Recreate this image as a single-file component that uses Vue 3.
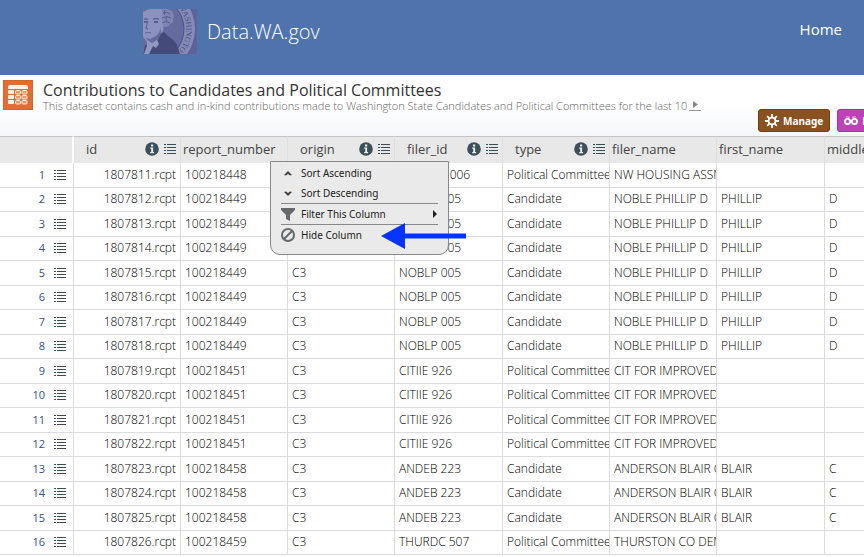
<script setup>
const columns = [
  { name: 'id', tools: true },
  { name: 'report_number', tools: false },
  { name: 'origin', tools: true, menu: true },
  { name: 'filer_id', tools: true, wide: true },
  { name: 'type', tools: true },
  { name: 'filer_name', tools: false },
  { name: 'first_name', tools: false, wide: true },
  { name: 'middle_name', tools: false },
]

const P = 'Political Committee'
const C = 'Candidate'
const filers = [
  ['100218448', 'NWHOM 006', P, 'NW HOUSING ASSN', '', ''],
  ...Array.from({ length: 7 }, () => ['100218449', 'NOBLP 005', C, 'NOBLE PHILLIP D', 'PHILLIP', 'D']),
  ...Array.from({ length: 4 }, () => ['100218451', 'CITIIE 926', P, 'CIT FOR IMPROVED', '', '']),
  ...Array.from({ length: 3 }, () => ['100218458', 'ANDEB 223', C, 'ANDERSON BLAIR C', 'BLAIR', 'C']),
  ['100218459', 'THURDC 507', P, 'THURSTON CO DEM', '', ''],
]
const rows = filers.map(([report, ...rest], i) => [`${1807811 + i}.rcpt`, report, 'C3', ...rest])
</script>

<template>
  <div class="page">
    <header class="site">
      <a class="brand" href="#">
        <svg class="seal" viewBox="0 0 54 45" aria-hidden="true">
          <defs>
            <path id="ring" d="M35-2A34 34 0 0 1 26 50" />
          </defs>
          <rect width="54" height="45" fill="#5d6299" />
          <circle cx="9" cy="20" r="43" fill="#858bb6" />
          <circle cx="9" cy="20" r="32.500" fill="#4d5489" />
          <circle cx="9" cy="20" r="31.500" fill="#666b9f" />
          <path d="M0 3Q6-1 13 0h7l1 14-1 8-4 5-1 7-8 2-3-3-4-5Z" fill="#8b92bc" />
          <path d="M19 0q5-1 7 1 4 0 4 4 2 2 0 5 1 4-3 5-1 3-5 3-3-1-2-5-2-3 0-6-2-4-1-7Z" fill="#7e85b1" />
          <path d="M20 4q4-2 7 1M19 9q5-3 9 0M19 14q4-3 8 0M22 1q-2 3 0 5m2 1q-2 3 0 5" fill="none" stroke="#5a6092" />
          <path d="M1 10.500q2-1 4 0m5 0q3-2 6 0" fill="none" stroke="#5b6194" stroke-width="1.300" />
          <path d="M1 13h3m7 0h4" stroke="#4a5082" stroke-width="1.400" />
          <path d="M5 12l-2 7 2 1m-3 4q3-1 6 0" fill="none" stroke="#60669a" stroke-width="1.200" />
          <path d="M17 17q1 6-4 10l-6 3-4-1 4 5 8 0 3-9Z" fill="#656b9d" />
          <path d="M14 33l4-8 3-2 4 4q8 4 11 14l1 7H0l2-12 8 1Z" fill="#444b7b" />
          <path d="M4 31l5 3 5-3 2 4-3 4-3-2-4 8H1l3-8Z" fill="#9299c1" />
          <text font-size="8" fill="#484f80" font-family="Liberation Serif, serif"><textPath href="#ring">WASHINGTON</textPath></text>
        </svg>
        <span>Data.WA.gov</span>
      </a>
      <a class="home" href="#">Home</a>
    </header>

    <section class="intro">
      <svg class="dataset-icon" viewBox="0 0 30 30" aria-hidden="true">
        <rect width="30" height="30" fill="#d8622c" />
        <rect x="1" y="1" width="28" height="28" fill="#e46c33" />
        <g fill="#fff2e6">
          <path d="M5 9V7q0-2 2-2h16q2 0 2 2v2Z" />
          <rect x="5" y="10" width="6" height="4" rx="1" />
          <rect x="5" y="15" width="6" height="4" rx="1" />
          <rect x="5" y="20" width="6" height="4" rx="1" />
        </g>
        <g fill="#ee9768" stroke="#fff2e6" stroke-width="1">
          <rect v-for="n in 6" :key="n" :x="n % 2 ? 12.5 : 19" :y="10.5 + Math.floor((n - 1) / 2) * 5" width="5" height="3.5" rx="1" />
        </g>
      </svg>
      <div class="titles">
        <h1>Contributions to Candidates and Political Committees</h1>
        <p>This dataset contains cash and in-kind contributions made to Washington State Candidates and Political Committees for the last 10<a class="expand" href="#" aria-label="Expand description"><svg viewBox="0 0 12 10"><path d="M4 1v7l5-3.500z" fill="#888" /></svg></a></p>
      </div>
      <div class="actions">
        <button class="manage" type="button">
          <svg viewBox="0 0 14 14" aria-hidden="true">
            <path d="M7 0v14M0 7h14M2.100 2.100l9.800 9.800M11.900 2.100l-9.800 9.800" stroke="#fff" stroke-width="1.800" />
            <circle cx="7" cy="7" r="4.300" fill="#fff" />
            <circle cx="7" cy="7" r="2.500" fill="#8a5220" />
          </svg>
          Manage
        </button>
        <button class="views" type="button">
          <svg viewBox="0 0 16 14" aria-hidden="true">
            <path d="M2.500 2.500h4M9.500 2.500h4" stroke="#fff" stroke-width="1" />
            <path d="M6.500 7q1.500-1 3 0" fill="none" stroke="#fff" stroke-width="2" />
            <circle cx="4" cy="7.500" r="3" fill="#c256bd" stroke="#fff" stroke-width="2" />
            <circle cx="12" cy="7.500" r="3" fill="#c256bd" stroke="#fff" stroke-width="2" />
          </svg>
          More Views
        </button>
      </div>
    </section>

    <main class="grid">
      <table>
        <colgroup>
          <col class="handle-col" />
          <col v-for="c in columns" :key="c.name" :class="c.wide ? 'wide-col' : 'data-col'" />
        </colgroup>
        <thead>
          <tr>
            <th class="corner"></th>
            <th v-for="c in columns" :key="c.name" scope="col" :class="{ tooled: c.tools, anchor: c.menu }">
              <div class="head">
                <span>{{ c.name }}</span>
                <template v-if="c.tools">
                  <button class="tool" type="button" :aria-label="`About ${c.name}`">
                    <svg class="info" viewBox="0 0 14 14"><circle cx="7" cy="7" r="6.800" fill="#3c5059" /><path d="M5.200 5.500h2.900v4.500h1v1.200H5.200V10h1V6.700h-1zM6 2.600h2.200v1.900H6z" fill="#eee" /></svg>
                  </button>
                  <button class="tool" type="button" :aria-label="`Menu for ${c.name}`">
                    <svg class="list" viewBox="0 0 12 12"><path d="M0 1.500h2m1 0h9M0 4.500h2m1 0h9M0 7.500h2m1 0h9M0 10.500h2m1 0h9" stroke="#3c4d56" /></svg>
                  </button>
                </template>
              </div>
              <div v-if="c.menu" class="menu">
                <button type="button"><svg viewBox="0 0 14 14"><path d="M3 9l4-4 4 4-2 .5-2-1.500-2 1.500z" fill="#444" /></svg>Sort Ascending</button>
                <button type="button"><svg viewBox="0 0 14 14"><path d="M3 6l4 4 4-4-2-.5-2 1.500-2-1.500z" fill="#444" /></svg>Sort Descending</button>
                <button type="button" class="ruled"><svg viewBox="0 0 14 14"><path d="M0 1h14v2L9 8v6l-4-2V8L0 3z" fill="#66696b" /></svg>Filter This Column<svg class="more" viewBox="0 0 6 10"><path d="M1 1l4 4-4 4z" fill="#222" /></svg></button>
                <button type="button" class="ruled"><svg viewBox="0 0 14 14"><circle cx="7" cy="7" r="6" fill="none" stroke="#66696b" stroke-width="2" /><path d="M3 11l8-8" stroke="#66696b" stroke-width="2" /></svg>Hide Column</button>
                <svg class="pointer" viewBox="0 0 85 26" aria-hidden="true"><path d="M0 13L24 0v10.500h61v5H24V26z" fill="#0432ff" /></svg>
              </div>
            </th>
          </tr>
        </thead>
        <tbody>
          <tr v-for="(row, i) in rows" :key="i">
            <th scope="row">
              <div class="handle">
                <a href="#">{{ i + 1 }}</a>
                <button class="tool" type="button" :aria-label="`Menu for row ${i + 1}`">
                  <svg class="list" viewBox="0 0 12 12"><path d="M0 1.500h2m1 0h9M0 4.500h2m1 0h9M0 7.500h2m1 0h9M0 10.500h2m1 0h9" stroke="#3c4d56" /></svg>
                </button>
              </div>
            </th>
            <td v-for="(cell, j) in row" :key="j">{{ cell }}</td>
          </tr>
        </tbody>
      </table>
    </main>
  </div>
</template>

<style>
body {
  margin: 0;
  background: #fff;
}
</style>

<style scoped>
.page {
  overflow: hidden;
  font-family: "Open Sans", "Liberation Sans", sans-serif;
  color: #333;
}
svg {
  display: block;
  flex: none;
}
button {
  font: inherit;
  color: inherit;
  border: 0;
  background: none;
  padding: 0;
}
.site {
  display: flex;
  justify-content: space-between;
  box-sizing: border-box;
  height: 75px;
  padding: 9px 22px 0 143px;
  background: #4f73ad;
}
.site a {
  color: #fff;
  text-decoration: none;
}
.brand {
  display: flex;
  gap: 10px;
  font-size: 20px;
  font-weight: 300;
  line-height: 46px;
}
.seal {
  width: 54px;
  height: 45px;
}
.home {
  font-size: 15px;
  line-height: 40px;
}
.intro {
  display: flex;
  box-sizing: border-box;
  height: 61px;
  padding: 5px 0 0 3px;
  background: linear-gradient(#fff 50%, #f5f6fa);
}
.dataset-icon {
  width: 30px;
  height: 30px;
}
.titles {
  flex: 1 1 0;
  min-width: 0;
  margin-left: 10px;
  white-space: nowrap;
}
h1 {
  margin: 0;
  font-size: 16px;
  font-weight: 400;
  line-height: 20px;
}
p {
  display: flex;
  margin: 0;
  font-size: 11px;
  font-weight: 300;
  line-height: 11px;
  color: #666;
}
.expand {
  margin-left: 2px;
  border-bottom: 1px solid #999;
}
.expand svg {
  width: 12px;
  height: 10px;
}
.actions {
  display: flex;
  flex: 0 0 106px;
  min-width: 0;
  gap: 7px;
  align-self: flex-end;
  margin-bottom: 4px;
}
.actions button {
  display: flex;
  flex: none;
  align-items: center;
  gap: 4px;
  box-sizing: border-box;
  height: 23px;
  padding: 0 6px;
  border-radius: 3px;
  font-family: "Noto Sans", "Open Sans", sans-serif;
  font-size: 10px;
  font-weight: 700;
  color: #fff;
  white-space: nowrap;
}
.actions svg {
  width: 14px;
  height: 14px;
}
.manage {
  background: #8a5220;
  border: 1px solid #70400f;
}
.views {
  background: #bd42b7;
  border: 1px solid #a334a0;
}
.grid {
  overflow: hidden;
}
table {
  width: 932px;
  table-layout: fixed;
  border-collapse: separate;
  border-spacing: 0;
}
.handle-col {
  width: 74px;
}
.data-col {
  width: 107px;
}
.wide-col {
  width: 108px;
}
th,
td {
  box-sizing: border-box;
  padding: 0;
  font-weight: 400;
  text-align: left;
  white-space: nowrap;
}
thead th {
  height: 27px;
  padding-bottom: 2px;
  background: #e8e8e8;
  border-top: 1px solid #c4c4c4;
  border-right: 1px solid #dedede;
  font-size: 13px;
  color: #444;
}
thead .corner {
  border-right: 2px solid #fff;
}
.head {
  display: flex;
  align-items: center;
  gap: 5px;
  padding: 0 4px 0 2px;
}
.tooled .head {
  padding-left: 12px;
}
.head span {
  flex: 1;
}
.info {
  width: 14px;
  height: 14px;
}
.list {
  width: 12px;
  height: 12px;
}
tbody th,
tbody td {
  height: 25px;
  border-right: 1px solid #dcdcdc;
  border-bottom: 1px solid #dcdcdc;
  font-size: 12px;
  line-height: 16px;
}
tbody tr:nth-child(even) > * {
  height: 24px;
}
tbody td {
  padding: 0 0 1px 4px;
  overflow: hidden;
  font-weight: 300;
  color: #000;
}
tbody td:nth-child(2) {
  padding-right: 4px;
  text-align: right;
}
.handle {
  display: flex;
  align-items: center;
  justify-content: flex-end;
  gap: 9px;
  padding: 0 7px 1px 0;
}
.handle a {
  font-size: 11px;
  color: #32508c;
  text-decoration: none;
}
.anchor {
  position: relative;
}
.menu {
  position: absolute;
  z-index: 2;
  top: 24px;
  left: -18px;
  box-sizing: border-box;
  width: 179px;
  padding: 1px 10px 9px;
  border: 1px solid #888;
  border-radius: 0 0 10px 10px;
  background: #eaeaea;
  font-family: "Noto Sans", "Open Sans", sans-serif;
  font-size: 10px;
  color: #222;
}
.menu button {
  display: flex;
  align-items: center;
  gap: 6px;
  box-sizing: border-box;
  width: 100%;
  height: 20px;
}
.menu button svg {
  width: 14px;
  height: 14px;
}
.menu .ruled {
  height: 21px;
  border-top: 1px solid #888;
}
.menu .ruled .more {
  width: 6px;
  height: 10px;
  margin-left: auto;
}
.pointer {
  position: absolute;
  top: 61px;
  left: 110px;
  width: 85px;
  height: 26px;
}
</style>
